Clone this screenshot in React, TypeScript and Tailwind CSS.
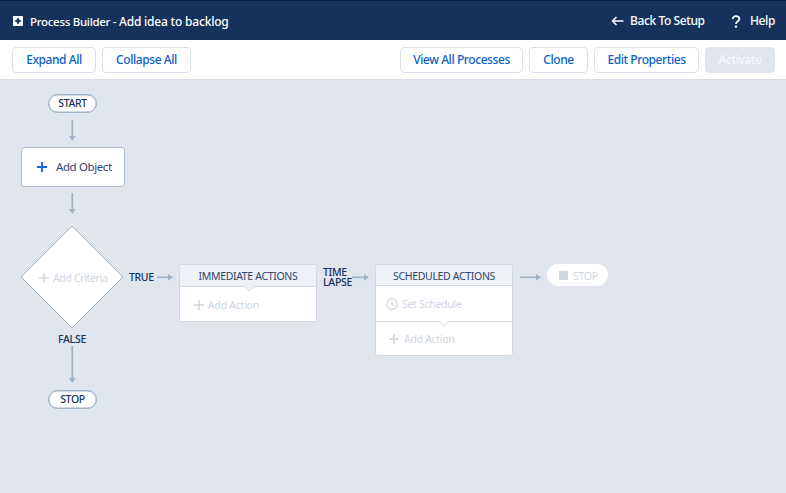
import type { ReactNode } from "react";

function Plus({ size, className = "", weight = 1.5 }: { size: number; className?: string; weight?: number }) {
  const m = size / 2;
  return (
    <svg width={size} height={size} className={`shrink-0 ${className}`} fill="none" stroke="currentColor" strokeWidth={weight}>
      <path d={`M${m} 0V${size}M0 ${m}H${size}`} />
    </svg>
  );
}

function ArrowDown({ length, className }: { length: number; className: string }) {
  return (
    <svg width="8" height={length} className={`absolute text-[#9fb1c5] ${className}`}>
      <path d={`M4.3 0V${length - 3}`} stroke="currentColor" strokeWidth="1.7" />
      <path d={`M0.9 ${length - 5}H7.7L4.3 ${length}Z`} fill="currentColor" />
    </svg>
  );
}

function ArrowRight({ length, className }: { length: number; className: string }) {
  return (
    <svg width={length} height="8" className={`absolute text-[#9fb1c5] ${className}`}>
      <path d={`M0 4.3H${length - 3}`} stroke="currentColor" strokeWidth="1.7" />
      <path d={`M${length - 5} 0.9V7.7L${length} 4.3Z`} fill="currentColor" />
    </svg>
  );
}

function Notch({ fill, className }: { fill: string; className: string }) {
  return (
    <svg width="12" height="6" className={`absolute ${className}`}>
      <path d="M1 0.5L6 5L11 0.5" fill={fill} stroke="#d2d8e0" strokeWidth="1" />
      <path d="M1.5 0.5H10.5" stroke={fill} strokeWidth="1" />
    </svg>
  );
}

function ToolButton({ children, className }: { children: ReactNode; className: string }) {
  return (
    <button className={`flex h-[26px] shrink-0 items-center justify-center rounded-[4px] border border-[#dcdfe9] bg-white text-[12px] font-medium tracking-[-0.42px] whitespace-nowrap text-[#0b62c6] ${className}`}>
      {children}
    </button>
  );
}

function Pill({ children, className }: { children: ReactNode; className: string }) {
  return (
    <div className={`absolute left-[48px] flex h-[19px] w-[49px] items-center justify-center rounded-full border border-[#9fb1c5] bg-white text-[10.5px] font-medium tracking-[-0.4px] text-[#16325c] shadow-[inset_0_0_0_0.5px_#9fb1c5] ${className}`}>
      {children}
    </div>
  );
}

export default function App() {
  return (
    <div className="flex h-[493px] w-[786px] flex-col overflow-hidden bg-[#e0e5ee] font-['Noto_Sans',sans-serif]">
      <header className="flex h-10 shrink-0 items-center border-t border-[#061f4b] bg-[#16325c] pr-[11px] pl-[13px] text-[12px] font-medium whitespace-nowrap text-white">
        <svg width="10" height="10" viewBox="0 0 10 10" className="mr-[7px] shrink-0">
          <rect width="10" height="10" rx="0.8" fill="#fff" />
          <path d="M5 1.9L6 4L8.1 5L6 6L5 8.1L4 6L1.9 5L4 4Z" fill="#16325c" stroke="#16325c" strokeWidth="0.8" />
        </svg>
        <span className="w-[89px] pt-[2px] text-[11.5px] tracking-[-0.3px]">Process Builder -</span>
        <span className="pt-[2px] tracking-[-0.2px]">Add idea to backlog</span>
        <svg width="13" height="10" viewBox="0 0 13 10" className="ml-auto mr-[6px] shrink-0" fill="none" stroke="#fff" strokeWidth="1.5">
          <path d="M12.5 5H1.5M5.5 1L1.5 5L5.5 9" />
        </svg>
        <span className="w-[74px] tracking-[-0.4px]">Back To Setup</span>
        <svg width="10" height="13" viewBox="0 0 10 13" className="mt-[2px] mr-[9px] ml-[27px] shrink-0">
          <path d="M1.7 4C1.7 0.2 8.3 0.2 8.3 4C8.3 6.2 5 6.3 5 9" fill="none" stroke="#fff" strokeWidth="1.8" />
          <circle cx="5" cy="11.6" r="1.2" fill="#fff" />
        </svg>
        <span className="w-[25px] tracking-[-0.4px]">Help</span>
      </header>

      <nav className="flex h-10 shrink-0 items-center border-b border-[#d8dde6] bg-white pr-[11px] pl-3">
        <ToolButton className="w-[84px]">Expand All</ToolButton>
        <ToolButton className="ml-[6px] w-[89px]">Collapse All</ToolButton>
        <ToolButton className="ml-auto w-[123px]">View All Processes</ToolButton>
        <ToolButton className="ml-[6px] w-[59px]">Clone</ToolButton>
        <ToolButton className="ml-[6px] w-[105px]">Edit Properties</ToolButton>
        <ToolButton className="ml-[6px] w-[70px] border-[#e0e5ee]! bg-[#e0e5ee]! text-[#f7f9fb]!">Activate</ToolButton>
      </nav>

      <main className="relative flex-1 leading-none whitespace-nowrap">
        <Pill className="top-[14px]">START</Pill>
        <ArrowDown length={21} className="top-[40px] left-[68px]" />

        <div className="absolute top-[67px] left-[21px] flex h-10 w-[104px] items-center rounded-[3px] border border-[#adbdce] bg-white pl-[15px] text-[11.5px] tracking-[-0.4px] text-[#2f4570]">
          <Plus size={10} weight={1.8} className="mr-[9px] text-[#0b62d0]" />
          <span>Add Object</span>
        </div>
        <ArrowDown length={21} className="top-[113px] left-[68px]" />

        <svg width="104" height="104" className="absolute top-[145px] left-[20px]">
          <path d="M50.5 2.5Q52 1 53.5 2.5L101.5 50.5Q103 52 101.5 53.5L53.5 101.5Q52 103 50.5 101.5L2.5 53.5Q1 52 2.5 50.5Z" fill="#fff" stroke="#9fb1c5" strokeWidth="1" />
        </svg>
        <div className="absolute top-[193px] left-[39px] flex items-center text-[10.5px] tracking-[-0.35px] text-[#d0d5e0]">
          <Plus size={10} className="mr-1" />
          <span>Add Criteria</span>
        </div>
        <div className="absolute top-[192px] left-[129px] text-[10.5px] font-medium tracking-[-0.35px] text-[#16325c]">TRUE</div>
        <ArrowRight length={16} className="top-[193px] left-[157px]" />

        <div className="absolute top-[254px] left-[58px] text-[10.5px] font-medium tracking-[-0.3px] text-[#16325c]">FALSE</div>
        <ArrowDown length={37} className="top-[266px] left-[68px]" />
        <Pill className="top-[310px]">STOP</Pill>

        <section className="absolute top-[184px] left-[179px] flex h-[58px] w-[138px] flex-col overflow-hidden rounded-[3px] border border-[#d2d8e0] bg-white">
          <h2 className="flex h-[22px] shrink-0 items-center justify-center border-b border-[#d2d8e0] bg-[#eef1f6] pt-[2px] text-[10.5px] tracking-[-0.33px] text-[#2f4570]">IMMEDIATE ACTIONS</h2>
          <Notch fill="#eef1f6" className="top-[21px] left-[63px]" />
          <div className="flex flex-1 items-center pt-px pl-[14px] text-[10.5px] tracking-[-0.25px] text-[#d0d5e0]">
            <Plus size={10} className="mr-1" />
            <span className="pt-[2px]">Add Action</span>
          </div>
        </section>

        <div className="absolute top-[187px] left-[323px] text-[10.5px] font-medium tracking-[-0.3px] text-[#16325c]">
          <div className="h-[10px] leading-[10px]">TIME</div>
          <div className="h-[10px] leading-[10px]">LAPSE</div>
        </div>
        <ArrowRight length={17} className="top-[193px] left-[352px]" />

        <section className="absolute top-[184px] left-[375px] flex h-[92px] w-[138px] flex-col overflow-hidden rounded-[3px] border border-[#d2d8e0] bg-white">
          <h2 className="flex h-[21px] shrink-0 items-center justify-center border-b border-[#d2d8e0] bg-[#eef1f6] pt-[2px] text-[10.5px] tracking-[-0.33px] text-[#2f4570]">SCHEDULED ACTIONS</h2>
          <div className="flex h-9 shrink-0 items-center border-b border-[#d2d8e0] pl-[10px] text-[10.5px] tracking-[-0.3px] text-[#d0d5e0]">
            <svg width="12" height="12" className="mr-[4px] shrink-0" fill="none" stroke="currentColor" strokeWidth="1.2">
              <circle cx="6" cy="6" r="5.3" />
              <path d="M6 2.8V6L8 8" />
            </svg>
            <span className="pt-[2px]">Set Schedule</span>
          </div>
          <Notch fill="#fff" className="top-[56px] left-[62px]" />
          <div className="flex flex-1 items-center pt-px pl-[13px] text-[10.5px] tracking-[-0.3px] text-[#d0d5e0]">
            <Plus size={10} className="mr-[5px]" />
            <span className="pt-px">Add Action</span>
          </div>
        </section>

        <ArrowRight length={21} className="top-[193px] left-[520px]" />
        <div className="absolute top-[184px] left-[547px] flex h-[22px] w-[61px] items-center rounded-full bg-white pl-3 text-[10.5px] tracking-[-0.3px] text-[#d0d5e0]">
          <span className="mr-[5px] size-[9px] bg-[#d0d5e0]" />
          <span className="pt-[2px]">STOP</span>
        </div>
      </main>
    </div>
  );
}
